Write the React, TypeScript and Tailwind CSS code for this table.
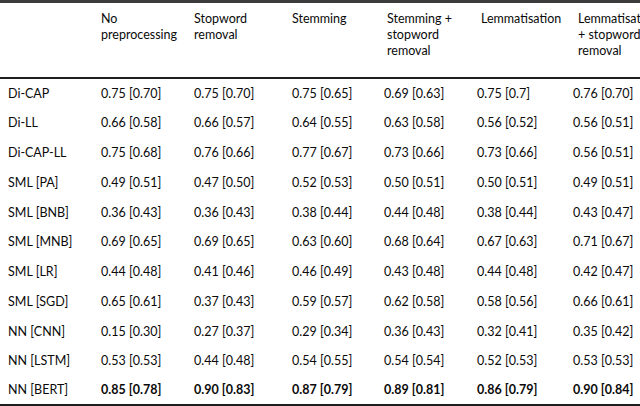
const headers: { lines: string[]; shift: string }[] = [
  { lines: ["No", "preprocessing"], shift: "" },
  { lines: ["Stopword", "removal"], shift: "" },
  { lines: ["Stemming"], shift: "" },
  { lines: ["Stemming +", "stopword", "removal"], shift: "pl-[3px]" },
  { lines: ["Lemmatisation"], shift: "pl-[4px]" },
  { lines: ["Lemmatisation", "+ stopword", "removal"], shift: "pl-[5px]" },
];

const rows: [string, string[]][] = [
  ["Di-CAP", ["0.75 [0.70]", "0.75 [0.70]", "0.75 [0.65]", "0.69 [0.63]", "0.75 [0.7]", "0.76 [0.70]"]],
  ["Di-LL", ["0.66 [0.58]", "0.66 [0.57]", "0.64 [0.55]", "0.63 [0.58]", "0.56 [0.52]", "0.56 [0.51]"]],
  ["Di-CAP-LL", ["0.75 [0.68]", "0.76 [0.66]", "0.77 [0.67]", "0.73 [0.66]", "0.73 [0.66]", "0.56 [0.51]"]],
  ["SML [PA]", ["0.49 [0.51]", "0.47 [0.50]", "0.52 [0.53]", "0.50 [0.51]", "0.50 [0.51]", "0.49 [0.51]"]],
  ["SML [BNB]", ["0.36 [0.43]", "0.36 [0.43]", "0.38 [0.44]", "0.44 [0.48]", "0.38 [0.44]", "0.43 [0.47]"]],
  ["SML [MNB]", ["0.69 [0.65]", "0.69 [0.65]", "0.63 [0.60]", "0.68 [0.64]", "0.67 [0.63]", "0.71 [0.67]"]],
  ["SML [LR]", ["0.44 [0.48]", "0.41 [0.46]", "0.46 [0.49]", "0.43 [0.48]", "0.44 [0.48]", "0.42 [0.47]"]],
  ["SML [SGD]", ["0.65 [0.61]", "0.37 [0.43]", "0.59 [0.57]", "0.62 [0.58]", "0.58 [0.56]", "0.66 [0.61]"]],
  ["NN [CNN]", ["0.15 [0.30]", "0.27 [0.37]", "0.29 [0.34]", "0.36 [0.43]", "0.32 [0.41]", "0.35 [0.42]"]],
  ["NN [LSTM]", ["0.53 [0.53]", "0.44 [0.48]", "0.54 [0.55]", "0.54 [0.54]", "0.52 [0.53]", "0.53 [0.53]"]],
  ["NN [BERT]", ["0.85 [0.78]", "0.90 [0.83]", "0.87 [0.79]", "0.89 [0.81]", "0.86 [0.79]", "0.90 [0.84]"]],
];

const cols = "grid grid-cols-[101px_93px_98px_92px_93px_96px_90px]";

export default function App() {
  return (
    <div
      className="w-[640px] h-[406px] overflow-hidden bg-white text-[#0a0a0a] text-[12.5px]"
      style={{ fontFamily: "Lato, 'Open Sans', sans-serif" }}
    >
      <div className="border-t-[3px] border-[#3c3c3c]">
        {/* Header */}
        <div className={`${cols} h-[76px] pt-[8px] leading-[16px] border-b-2 border-[#1e1e1e]`}>
          <div />
          {headers.map((h, i) => (
            <div key={i} className={`whitespace-nowrap ${h.shift}`}>
              {h.lines.map((l, j) => (
                <div key={j}>{l}</div>
              ))}
            </div>
          ))}
        </div>

        {/* Body */}
        {rows.map(([label, vals], r) => {
          const last = r === rows.length - 1;
          return (
            <div
              key={label}
              className={`${cols} h-[29.75px] items-center ${last ? "border-b-2 border-[#1e1e1e]" : ""}`}
            >
              <div className="pl-[8px]">{label}</div>
              {vals.map((v, i) => (
                <div key={i} className={`whitespace-nowrap ${last ? "font-bold" : ""}`}>
                  {v}
                </div>
              ))}
            </div>
          );
        })}
      </div>
    </div>
  );
}
